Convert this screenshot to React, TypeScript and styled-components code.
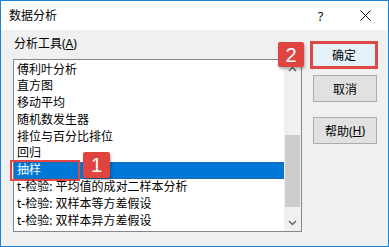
import React from "react";
import styled, { createGlobalStyle } from "styled-components";

const GlobalStyle = createGlobalStyle`
  html, body {
    margin: 0;
    padding: 0;
    background: #ffffff;
  }
  body {
    font-family: "Noto Sans", "Noto Sans CJK SC", sans-serif;
    font-size: 12px;
    color: #000;
  }
`;

const Window = styled.div`
  width: 389px;
  height: 247px;
  box-sizing: border-box;
  border: 1px solid #1883d7;
  display: flex;
  flex-direction: column;
  background: #f0f0f0;
`;

const TitleBar = styled.div`
  height: 29px;
  background: #ffffff;
  display: flex;
  align-items: center;
  padding: 0 0 0 8px;
  font-size: 12px;
`;

const Title = styled.span`
  flex: 1;
  line-height: 29px;
`;

const TitleButton = styled.div`
  width: 45px;
  height: 29px;
  display: flex;
  align-items: center;
  justify-content: center;
  font-size: 13px;
  color: #111;
`;

const Body = styled.div`
  flex: 1;
  display: flex;
  padding: 5px 0 0 12px;
  gap: 11px;
`;

const LeftColumn = styled.div`
  display: flex;
  flex-direction: column;
`;

const Label = styled.div`
  line-height: 18px;
  height: 18px;
  margin-bottom: 6px;
  padding-left: 1px;
  u {
    text-decoration: underline;
  }
`;

const ListWrap = styled.div`
  position: relative;
  width: 289px;
  height: 173px;
  box-sizing: border-box;
  border: 1px solid #828790;
  background: #ffffff;
  display: flex;
`;

const Items = styled.div`
  flex: 1;
  padding-top: 1.5px;
`;

const Item = styled.div<{ selected?: boolean }>`
  position: relative;
  height: 16.8px;
  line-height: 16.8px;
  padding-left: 3px;
  white-space: nowrap;
  background: ${(p) => (p.selected ? "#0078d7" : "transparent")};
  color: ${(p) => (p.selected ? "#ffffff" : "#000000")};
  outline: ${(p) => (p.selected ? "1px dotted #3a5f8a" : "none")};
  outline-offset: -1px;
`;

const Scrollbar = styled.div`
  width: 17px;
  background: #f0f0f0;
  display: flex;
  flex-direction: column;
`;

const ArrowButton = styled.div`
  height: 17px;
  display: flex;
  align-items: center;
  justify-content: center;
`;

const Track = styled.div`
  flex: 1;
  display: flex;
  flex-direction: column;
  padding: 58px 1px 7px 1px;
`;

const Thumb = styled.div`
  height: 72px;
  background: #cdcdcd;
`;

const Highlight = styled.div`
  position: absolute;
  left: -4px;
  top: -2px;
  width: 70px;
  height: 21px;
  box-sizing: border-box;
  border: 2px solid #e04848;
  pointer-events: none;
`;

const Badge = styled.div<{ left: number; top: number; size: number }>`
  position: absolute;
  left: ${(p) => p.left}px;
  top: ${(p) => p.top}px;
  width: ${(p) => p.size}px;
  height: ${(p) => p.size - 1}px;
  background: #e04440;
  color: #ffffff;
  border-radius: 2px;
  box-shadow: 1px 2px 3px rgba(0, 0, 0, 0.3);
  display: flex;
  align-items: center;
  justify-content: center;
  font-family: "Liberation Sans", "Noto Sans", sans-serif;
  font-size: 20px;
  line-height: 1;
  z-index: 2;
`;

const RightColumn = styled.div`
  display: flex;
  flex-direction: column;
  padding-top: 6px;
`;

const Button = styled.div<{ primary?: boolean }>`
  width: ${(p) => (p.primary ? "68px" : "64px")};
  height: ${(p) => (p.primary ? "28px" : "27px")};
  margin-left: ${(p) => (p.primary ? "-3px" : "0")};
  margin-bottom: ${(p) => (p.primary ? "6px" : "15px")};
  box-sizing: border-box;
  border: ${(p) => (p.primary ? "3px solid #e04848" : "1px solid #adadad")};
  background: ${(p) => (p.primary ? "#e5f1fb" : "#e1e1e1")};
  display: flex;
  align-items: center;
  justify-content: center;
  font-size: 12px;
  u {
    text-decoration: underline;
  }
`;

const Chevron = ({ up }: { up?: boolean }) => (
  <svg width="9" height="6" viewBox="0 0 9 6">
    <path
      d={up ? "M1 5 L4.5 1.5 L8 5" : "M1 1 L4.5 4.5 L8 1"}
      fill="none"
      stroke="#606060"
      strokeWidth="1.4"
    />
  </svg>
);

const items = [
  "傅利叶分析",
  "直方图",
  "移动平均",
  "随机数发生器",
  "排位与百分比排位",
  "回归",
  "抽样",
  "t-检验: 平均值的成对二样本分析",
  "t-检验: 双样本等方差假设",
  "t-检验: 双样本异方差假设",
];

export default function App() {
  return (
    <>
      <GlobalStyle />
      <Window>
        <TitleBar>
          <Title>数据分析</Title>
          <TitleButton>?</TitleButton>
          <TitleButton>
            <svg width="11" height="11" viewBox="0 0 11 11">
              <path d="M0.5 0.5 L10.5 10.5 M10.5 0.5 L0.5 10.5" stroke="#111" strokeWidth="1" />
            </svg>
          </TitleButton>
        </TitleBar>
        <Body>
          <LeftColumn>
            <Label>
              分析工具(<u>A</u>)
            </Label>
            <ListWrap>
              <Items>
                {items.map((t) => (
                  <Item key={t} selected={t === "抽样"}>
                    {t}
                    {t === "抽样" && (
                      <>
                        <Highlight />
                        <Badge left={69} top={-10} size={27}>
                          1
                        </Badge>
                      </>
                    )}
                  </Item>
                ))}
              </Items>
              <Scrollbar>
                <ArrowButton>
                  <Chevron up />
                </ArrowButton>
                <Track>
                  <Thumb />
                </Track>
                <ArrowButton>
                  <Chevron />
                </ArrowButton>
              </Scrollbar>
              <Badge left={264} top={-18} size={26}>
                2
              </Badge>
            </ListWrap>
          </LeftColumn>
          <RightColumn>
            <Button primary>确定</Button>
            <Button>取消</Button>
            <Button>
              帮助(<u>H</u>)
            </Button>
          </RightColumn>
        </Body>
      </Window>
    </>
  );
}
